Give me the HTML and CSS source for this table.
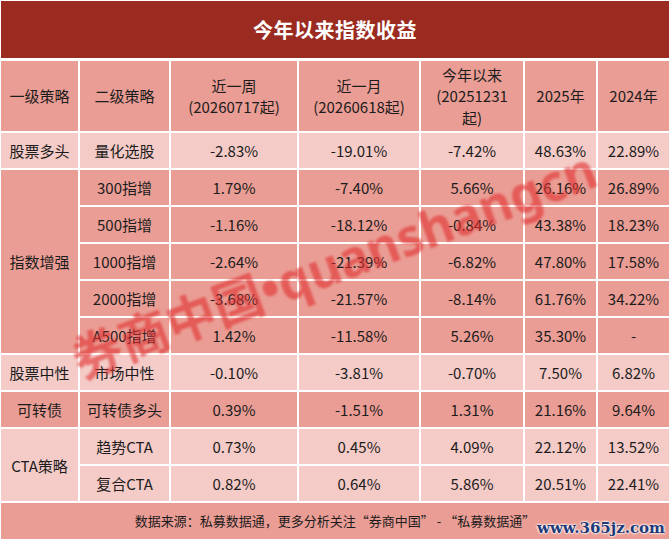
FILE: index.html
```html
<!DOCTYPE html>
<html lang="zh-CN">
<head>
<meta charset="utf-8">
<title>今年以来指数收益</title>
<link rel="stylesheet" href="styles.css">
</head>
<body>
<div class="page">
  <div class="title">今年以来指数收益</div>
  <table class="grid">
    <colgroup>
      <col class="c1"><col class="c2"><col class="c3"><col class="c4"><col class="c5"><col class="c6"><col class="c7">
    </colgroup>
    <tr class="head dark">
      <td>一级策略</td>
      <td>二级策略</td>
      <td>近一周<br>(20260717起)</td>
      <td>近一月<br>(20260618起)</td>
      <td>今年以来<br>(20251231<br>起)</td>
      <td>2025年</td>
      <td>2024年</td>
    </tr>
    <tr class="light">
      <td>股票多头</td><td>量化选股</td><td>-2.83%</td><td>-19.01%</td><td>-7.42%</td><td>48.63%</td><td>22.89%</td>
    </tr>
    <tr class="dark">
      <td rowspan="5">指数增强</td><td>300指增</td><td>1.79%</td><td>-7.40%</td><td>5.66%</td><td>26.16%</td><td>26.89%</td>
    </tr>
    <tr class="dark">
      <td>500指增</td><td>-1.16%</td><td>-18.12%</td><td>-0.84%</td><td>43.38%</td><td>18.23%</td>
    </tr>
    <tr class="dark">
      <td>1000指增</td><td>-2.64%</td><td>-21.39%</td><td>-6.82%</td><td>47.80%</td><td>17.58%</td>
    </tr>
    <tr class="dark">
      <td>2000指增</td><td>-3.68%</td><td>-21.57%</td><td>-8.14%</td><td>61.76%</td><td>34.22%</td>
    </tr>
    <tr class="dark">
      <td>A500指增</td><td>1.42%</td><td>-11.58%</td><td>5.26%</td><td>35.30%</td><td>-</td>
    </tr>
    <tr class="light">
      <td>股票中性</td><td>市场中性</td><td>-0.10%</td><td>-3.81%</td><td>-0.70%</td><td>7.50%</td><td>6.82%</td>
    </tr>
    <tr class="dark">
      <td>可转债</td><td>可转债多头</td><td>0.39%</td><td>-1.51%</td><td>1.31%</td><td>21.16%</td><td>9.64%</td>
    </tr>
    <tr class="light">
      <td rowspan="2">CTA策略</td><td>趋势CTA</td><td>0.73%</td><td>0.45%</td><td>4.09%</td><td>22.12%</td><td>13.52%</td>
    </tr>
    <tr class="light">
      <td>复合CTA</td><td>0.82%</td><td>0.64%</td><td>5.86%</td><td>20.51%</td><td>22.41%</td>
    </tr>
    <tr class="foot dark">
      <td colspan="7">数据来源：私募数据通，更多分析关注“券商中国” - “私募数据通”</td>
    </tr>
  </table>
  <div class="wm">券商中国•quanshangcn</div>
  <div class="site">www.365jz.com</div>
</div>
</body>
</html>
```

FILE: styles.css
```css
html, body {
  margin: 0;
  padding: 0;
  background: #ffffff;
  overflow: hidden;
}
.page {
  position: relative;
  width: 671px;
  height: 541px;
  font-family: "Noto Sans CJK SC", "Noto Sans", sans-serif;
  color: #1c1c1c;
}
.title {
  margin: 1px 0 1px 1px;
  width: 668px;
  height: 57px;
  background: #9b2b20;
  color: #ffffff;
  font-size: 20px;
  font-weight: 700;
  line-height: 57px;
  text-align: center;
  letter-spacing: 0.5px;
}
.grid {
  margin-left: -1px;
  width: 672px;
  table-layout: fixed;
  border-collapse: separate;
  border-spacing: 2px;
  font-size: 15px;
}
.c1 { width: 77px; }
.c2 { width: 89px; }
.c3 { width: 126px; }
.c4 { width: 120px; }
.c5 { width: 102px; }
.c6 { width: 71px; }
.c7 { width: 71px; }
.grid td {
  padding: 0;
  height: 35px;
  text-align: center;
  vertical-align: middle;
  line-height: 21px;
  white-space: nowrap;
}
.dark td { background: #ea9d94; }
.light td { background: #f4cbc7; }
.head td {
  height: 70px;
  line-height: 21.5px;
}
.foot td {
  height: 36px;
  font-size: 13px;
  line-height: 36px;
}
.wm {
  position: absolute;
  left: 333px;
  top: 261px;
  transform: translate(-50%, -50%) rotate(-20.5deg);
  font-family: "Noto Sans", "Noto Sans CJK SC", sans-serif;
  font-size: 50px;
  font-weight: 700;
  color: rgba(224, 50, 50, 0.62);
  white-space: nowrap;
  filter: blur(1px);
  pointer-events: none;
}
.site {
  position: absolute;
  right: 6px;
  bottom: 5px;
  font-family: "DejaVu Serif", serif;
  font-size: 15px;
  font-weight: 700;
  color: #1d3a78;
  text-shadow: 0 0 2px #ffffff, 0 0 2px #ffffff, 0 0 3px #ffffff;
}
```
